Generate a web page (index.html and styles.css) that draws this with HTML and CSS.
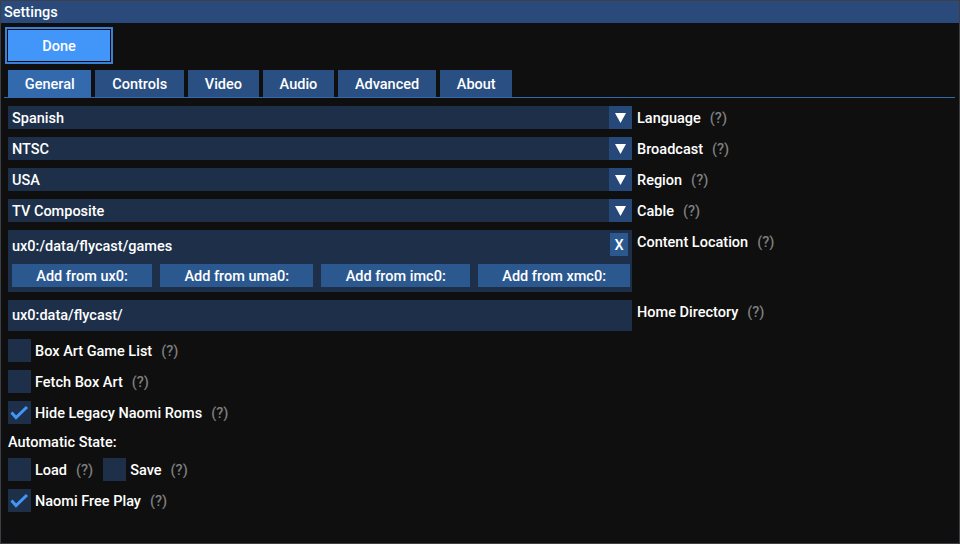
FILE: index.html
```html
<!DOCTYPE html>
<html>
<head>
<meta charset="utf-8">
<link rel="stylesheet" href="styles.css">
</head>
<body>
<div class="window">
  <div class="titlebar">Settings</div>
  <div class="body">
    <div class="done-row"><div class="done">Done</div></div>
    <div class="tabs">
      <div class="tab active">General</div>
      <div class="tab">Controls</div>
      <div class="tab">Video</div>
      <div class="tab">Audio</div>
      <div class="tab">Advanced</div>
      <div class="tab">About</div>
    </div>
    <div class="tabline"></div>
    <div class="rows">
      <div class="row">
        <div class="combo"><span class="combo-text">Spanish</span><span class="arrow"><svg width="11" height="10" viewBox="0 0 11 10"><polygon points="0,0 11,0 5.5,10" fill="#fff"/></svg></span></div>
        <span class="label">Language</span><span class="help">(?)</span>
      </div>
      <div class="row">
        <div class="combo"><span class="combo-text">NTSC</span><span class="arrow"><svg width="11" height="10" viewBox="0 0 11 10"><polygon points="0,0 11,0 5.5,10" fill="#fff"/></svg></span></div>
        <span class="label">Broadcast</span><span class="help">(?)</span>
      </div>
      <div class="row">
        <div class="combo"><span class="combo-text">USA</span><span class="arrow"><svg width="11" height="10" viewBox="0 0 11 10"><polygon points="0,0 11,0 5.5,10" fill="#fff"/></svg></span></div>
        <span class="label">Region</span><span class="help">(?)</span>
      </div>
      <div class="row">
        <div class="combo"><span class="combo-text">TV Composite</span><span class="arrow"><svg width="11" height="10" viewBox="0 0 11 10"><polygon points="0,0 11,0 5.5,10" fill="#fff"/></svg></span></div>
        <span class="label">Cable</span><span class="help">(?)</span>
      </div>
      <div class="row top">
        <div class="content-box">
          <div class="content-line"><span class="path">ux0:/data/flycast/games</span><span class="xbtn">X</span></div>
          <div class="add-row">
            <span class="btn">Add from ux0:</span>
            <span class="btn">Add from uma0:</span>
            <span class="btn">Add from imc0:</span>
            <span class="btn">Add from xmc0:</span>
          </div>
        </div>
        <span class="label top-label">Content Location</span><span class="help top-label">(?)</span>
      </div>
      <div class="row top">
        <div class="home-box">ux0:data/flycast/</div>
        <span class="label top-label">Home Directory</span><span class="help top-label">(?)</span>
      </div>
      <div class="row">
        <span class="check"></span><span class="clabel">Box Art Game List</span><span class="help">(?)</span>
      </div>
      <div class="row">
        <span class="check"></span><span class="clabel">Fetch Box Art</span><span class="help">(?)</span>
      </div>
      <div class="row">
        <span class="check"><svg width="23" height="23" viewBox="0 0 23 23"><polyline points="3.5,11.5 8,16.5 19,6" fill="none" stroke="#4296fa" stroke-width="3"/></svg></span><span class="clabel">Hide Legacy Naomi Roms</span><span class="help">(?)</span>
      </div>
      <div class="text-line">Automatic State:</div>
      <div class="row">
        <span class="check"></span><span class="clabel">Load</span><span class="help">(?)</span>
        <span class="check second"></span><span class="clabel">Save</span><span class="help">(?)</span>
      </div>
      <div class="row">
        <span class="check"><svg width="23" height="23" viewBox="0 0 23 23"><polyline points="3.5,11.5 8,16.5 19,6" fill="none" stroke="#4296fa" stroke-width="3"/></svg></span><span class="clabel">Naomi Free Play</span><span class="help">(?)</span>
      </div>
    </div>
  </div>
</div>
</body>
</html>
```

FILE: styles.css
```css
* { box-sizing: border-box; }
html, body {
  margin: 0;
  padding: 0;
  background: #0f0f0f;
}
body {
  font-family: Roboto, "Liberation Sans", sans-serif;
  font-weight: 500;
  font-size: 14.5px;
  color: #ffffff;
  white-space: nowrap;
}
.window {
  width: 960px;
  height: 544px;
  border: 1px solid #3e3e47;
  background: #0f0f0f;
  display: flex;
  flex-direction: column;
  overflow: hidden;
}
.titlebar {
  height: 22px;
  line-height: 24px;
  background: #294a7a;
  padding-left: 3px;
  flex: none;
}
.body {
  padding: 0 7px;
  display: flex;
  flex-direction: column;
}
.done-row {
  padding-top: 7px;
  display: flex;
}
.done {
  width: 102px;
  height: 31px;
  line-height: 33px;
  text-align: center;
  background: #4296fa;
  box-shadow: 0 0 0 1px #0f0f0f, 0 0 0 3px #3b80d6;
}
.tabs {
  margin-top: 9px;
  display: flex;
  gap: 4px;
  height: 27px;
}
.tab {
  flex: none;
  height: 27px;
  line-height: 29px;
  padding: 0 16.8px;
  background: #2a4f82;
  text-align: center;
}
.tab.active {
  background: #3369ad;
}
.tabline {
  height: 1px;
  background: #3369ad;
  margin: 0 -3px 0 -4px;
}
.rows {
  margin-top: 8px;
  display: flex;
  flex-direction: column;
  gap: 8px;
}
.row {
  display: flex;
  align-items: center;
  min-height: 23px;
}
.row.top {
  align-items: flex-start;
}
.combo {
  width: 624px;
  height: 23px;
  background: #1d2f49;
  display: flex;
  align-items: center;
  flex: none;
}
.combo-text {
  flex: 1;
  padding-left: 4px;
  line-height: 26px;
  height: 23px;
}
.arrow {
  width: 23px;
  height: 23px;
  background: #27497a;
  display: flex;
  align-items: center;
  justify-content: center;
}
.arrow svg { display: block; }
.label, .help, .clabel {
  line-height: 18px;
  padding-top: 2px;
}
.label {
  margin-left: 5px;
}
.help {
  margin-left: 9px;
  color: #7f7f7f;
}
.top-label {
  margin-top: 4px;
  padding-top: 0;
}
.content-box {
  width: 624px;
  height: 62px;
  background: #1d2f49;
  padding: 3px 4px 5px 4px;
  flex: none;
  display: flex;
  flex-direction: column;
  gap: 8px;
}
.content-line {
  display: flex;
  align-items: flex-start;
  justify-content: space-between;
  height: 23px;
}
.path {
  line-height: 28px;
  height: 23px;
}
.xbtn {
  width: 18px;
  height: 23px;
  line-height: 25px;
  text-align: center;
  background: #2c5890;
}
.add-row {
  display: flex;
  gap: 8px;
  height: 23px;
}
.btn {
  flex: none;
  height: 23px;
  line-height: 25px;
  padding: 0 24.3px;
  background: #2c5890;
}
.home-box {
  width: 624px;
  height: 31px;
  line-height: 32px;
  background: #1d2f49;
  padding-left: 4px;
  flex: none;
}
.check {
  width: 23px;
  height: 23px;
  background: #1d2f49;
  flex: none;
}
.check svg { display: block; }
.check.second {
  margin-left: 10px;
}
.clabel {
  margin-left: 4px;
}
.text-line {
  height: 18px;
  line-height: 22px;
}
```
